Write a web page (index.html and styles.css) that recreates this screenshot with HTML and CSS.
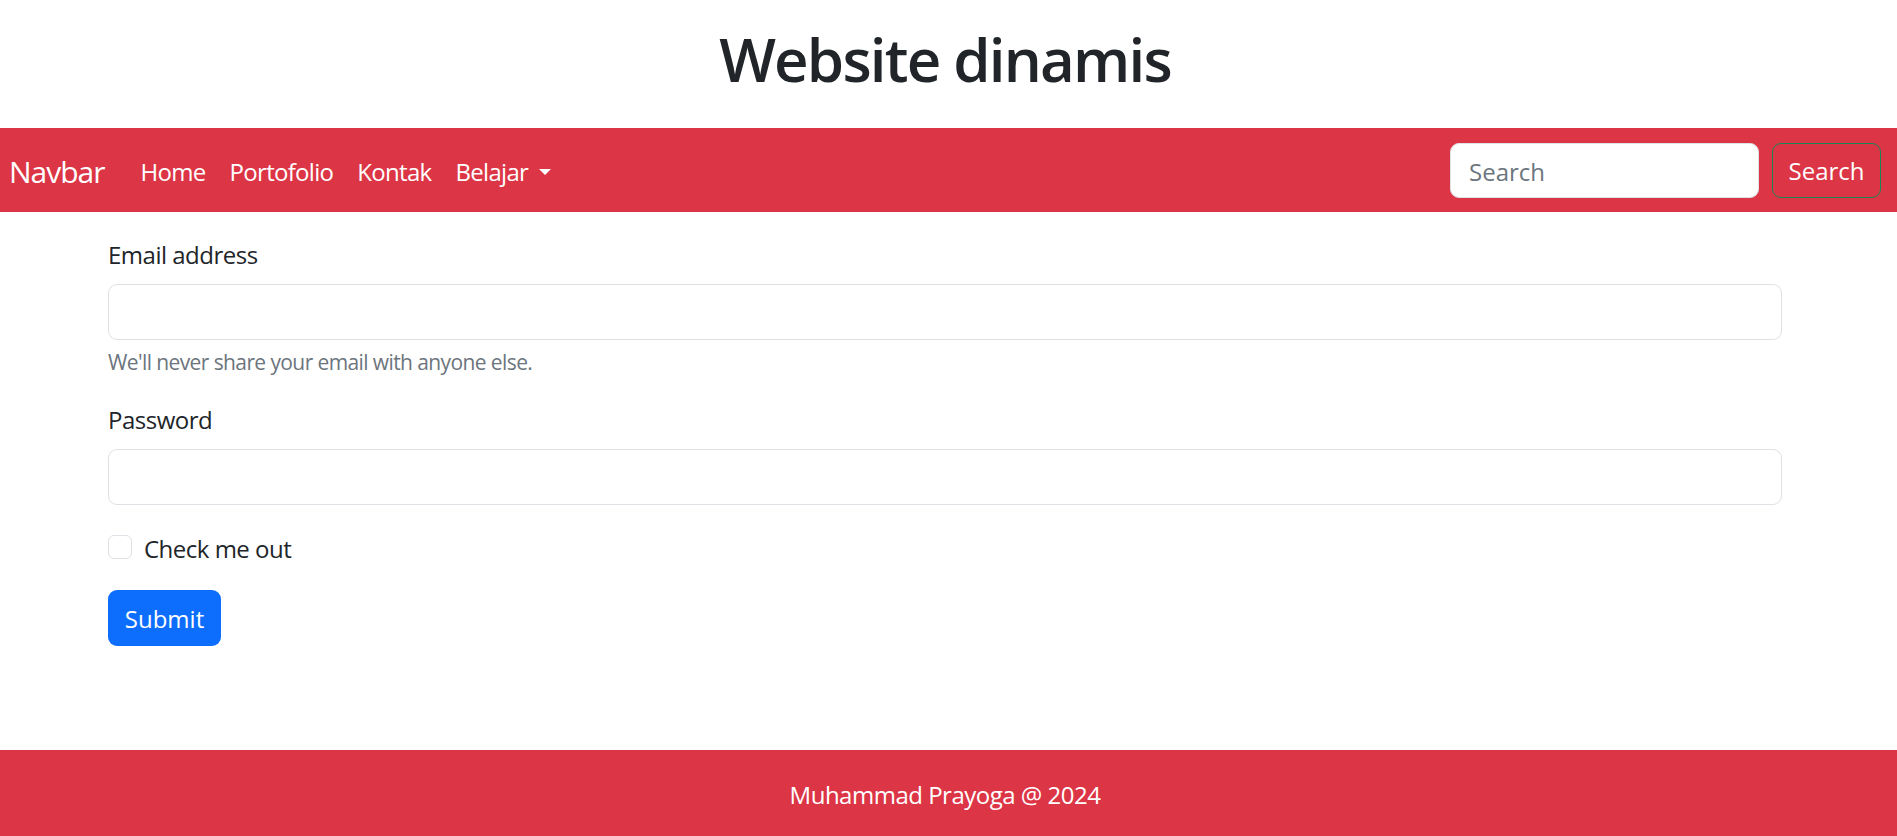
FILE: index.html
```html
<!DOCTYPE html>
<html lang="id">
<head>
<meta charset="utf-8">
<title>Website dinamis</title>
<link rel="stylesheet" href="styles.css">
</head>
<body>
<header class="site-header">
  <h1 class="site-title">Website dinamis</h1>
</header>
<nav class="navbar">
  <a class="brand" href="#">Navbar</a>
  <ul class="nav-links">
    <li><a class="nav-link" href="#">Home</a></li>
    <li><a class="nav-link" href="#">Portofolio</a></li>
    <li><a class="nav-link" href="#">Kontak</a></li>
    <li><a class="nav-link dropdown" href="#">Belajar<span class="caret"></span></a></li>
  </ul>
  <form class="search-form">
    <input class="search-input" type="search" placeholder="Search">
    <button class="search-btn" type="button">Search</button>
  </form>
</nav>
<main class="content">
  <div class="container">
    <form class="login-form">
      <div class="field">
        <label class="field-label" for="email">Email address</label>
        <input class="field-input" id="email" type="email">
        <div class="field-help">We'll never share your email with anyone else.</div>
      </div>
      <div class="field">
        <label class="field-label" for="pw">Password</label>
        <input class="field-input" id="pw" type="password">
      </div>
      <div class="check">
        <span class="check-box"></span>
        <label class="check-label">Check me out</label>
      </div>
      <button class="submit-btn" type="button">Submit</button>
    </form>
  </div>
</main>
<footer class="site-footer">
  <p class="footer-text">Muhammad Prayoga @ 2024</p>
</footer>
</body>
</html>
```
FILE: styles.css
```css
* { box-sizing: border-box; }
html, body { margin: 0; padding: 0; }
body {
  font-family: "Open Sans", "Noto Sans", sans-serif;
  font-size: 24px;
  line-height: 36px;
  color: #212529;
  background: #fff;
  letter-spacing: -0.5px;
}
.site-header {
  padding: 23px 7px 33px 0;
  text-align: center;
}
.site-title {
  margin: 0;
  font-size: 60px;
  line-height: 72px;
  font-weight: 600;
  letter-spacing: -1.8px;
  color: #212529;
}
.navbar {
  display: flex;
  align-items: center;
  background: #dc3545;
  padding: 12px 16px 12px 8px;
  height: 84px;
}
.brand {
  color: #fff;
  text-decoration: none;
  font-size: 30px;
  line-height: 45px;
  padding: 9px 0 6px 1px;
  margin-right: 24px;
  letter-spacing: -1px;
}
.nav-links {
  display: flex;
  list-style: none;
  margin: 0;
  padding: 0;
  flex: 1;
}
.nav-link {
  display: flex;
  align-items: center;
  color: #fff;
  text-decoration: none;
  padding: 14px 12px 10px;
  line-height: 36px;
  letter-spacing: -0.7px;
}
.caret {
  display: inline-block;
  margin-left: 11px;
  width: 0;
  height: 0;
  border-top: 6px solid #fff;
  border-left: 6px solid transparent;
  border-right: 6px solid transparent;
}
.search-form {
  display: flex;
  align-items: center;
}
.search-input {
  width: 309px;
  height: 55px;
  border: 1.5px solid #dee2e6;
  border-radius: 9px;
  background: #fff;
  padding: 2px 18px 0;
  font: inherit;
  color: #212529;
  margin-right: 13px;
  outline: none;
}
.search-input::placeholder { color: #6c757d; opacity: 1; }
.search-btn {
  height: 55px;
  width: 109px;
  border: 1.5px solid #198754;
  border-radius: 9px;
  background: transparent;
  color: #fff;
  font: inherit;
  padding: 2px 0 0;
}
.content {
  padding: 25px 7px 0 0;
}
.container {
  max-width: 1674px;
  margin: 0 auto;
}
.field { margin-bottom: 24px; }
.field-label {
  display: block;
  margin-bottom: 11px;
}
.field-input {
  display: block;
  width: 100%;
  height: 56px;
  border: 1.5px solid #dee2e6;
  border-radius: 9px;
  background: #fff;
  padding: 0 18px;
  font: inherit;
}
.field-help {
  margin-top: 6px;
  font-size: 21px;
  line-height: 32px;
  color: #6c757d;
  letter-spacing: -0.6px;
}
.check {
  display: flex;
  align-items: flex-start;
  min-height: 36px;
  margin-bottom: 23px;
}
.check-box {
  width: 24px;
  height: 24px;
  margin-top: 6px;
  border: 1.5px solid #dee2e6;
  border-radius: 6px;
  background: #fff;
  margin-right: 12px;
}
.check-label { line-height: 36px; padding-top: 2px; }
.submit-btn {
  height: 56px;
  width: 113px;
  border: none;
  border-radius: 9px;
  background: #0d6efd;
  color: #fff;
  font: inherit;
  padding: 2px 0 0;
}
.site-footer {
  margin-top: 104px;
  background: #dc3545;
  padding: 27px 7px 26px 0;
  text-align: center;
  color: #fff;
}
.footer-text {
  margin: 0;
  line-height: 36px;
}
```
